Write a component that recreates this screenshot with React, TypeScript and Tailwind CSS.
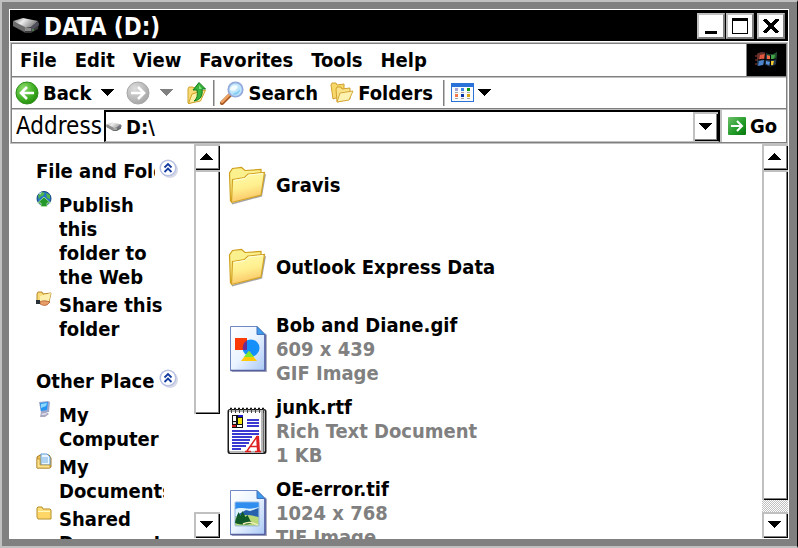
import type { ReactNode } from "react";

const FONT = "font-['DejaVu_Sans_Condensed','DejaVu_Sans',sans-serif]";

function Triangle({ up = false, className = "" }: { up?: boolean; className?: string }) {
  return (
    <svg width="13" height="7" viewBox="0 0 13 7" shapeRendering="crispEdges" className={className} aria-hidden="true">
      <path d={up ? "M0 7L6 0h1l6 7z" : "M0 0h13L7 7H6z"} fill="currentColor" />
    </svg>
  );
}

function DriveIcon({ className, dark = false }: { className: string; dark?: boolean }) {
  const top = dark ? "driveTopDark" : "driveTop";
  return (
    <svg viewBox="0 0 28 18" className={className} aria-hidden="true">
      <defs>
        <linearGradient id={top} x2="1" y2="0.4">
          <stop stopColor={dark ? "#6e6e6e" : "#b0b0b0"} />
          <stop offset="0.45" stopColor="#ececec" />
          <stop offset="1" stopColor={dark ? "#7c7c7c" : "#a4a4a4"} />
        </linearGradient>
      </defs>
      <path d="M1 5v4l12 7h6l7-4 1-6z" fill={dark ? "#3a3a3a" : "#6a6a6a"} />
      <path d="M1 4l10-3 15 3-7 6-7 1z" fill={`url(#${top})`} />
      <path d="M1 4l12 6v5L1 9z" fill={dark ? "#6b6b6b" : "#8d8d8d"} />
      <path d="M19 10l7-6 1 4-8 6z" fill={dark ? "#50505c" : "#747480"} />
      <path d="M13 11h6v3h-6z" fill={dark ? "#8c8c8c" : "#b4b4b4"} />
      <path d="M20 12h2v2h-2z" fill="#4d7a4d" />
    </svg>
  );
}

function WindowsFlag() {
  return (
    <svg viewBox="0 0 24 20" className="h-5 w-6" aria-hidden="true">
      <path d="M2 4c3-2 6-2 9-1 3 2 7 2 11-1l-1 12c-3 3-7 3-10 1-3-1-6-1-9 1z" fill="#26384c" />
      <path d="M2 4c3-2 6-2 9-1l-1 6-8 1z" fill="#6b2f2a" />
      <path d="M12 4c3 1 6 1 10-2l-1 7-9 1z" fill="#1f5a28" />
      <path d="M5 5l5-1-1 5-5 1z" fill="#e0583f" />
      <path d="M12 5l3 1v4h-3z" fill="#ef6a45" />
      <path d="M16 5h4l-1 4h-3z" fill="#42a34b" />
      <path d="M4 11l5-1-1 5-5 1z" fill="#4b83cc" />
      <path d="M11 11l4 1-1 3-3-1z" fill="#5b94dc" />
      <path d="M16 11h3l-1 4h-2z" fill="#f0c72e" />
      <path d="M10.500 3l-1 13M3 10c5-2 11 1 18-1M15.500 5v11" stroke="#000" strokeWidth="1" fill="none" />
      <path d="M1 5v2m0 2v2m0 2v2" stroke="#a33e35" strokeWidth="1" />
    </svg>
  );
}

function RoundArrow({ forward = false }: { forward?: boolean }) {
  const id = forward ? "fwdFill" : "backFill";
  return (
    <svg viewBox="0 0 24 24" className="size-6 shrink-0" aria-hidden="true">
      <defs>
        <radialGradient id={id} cx="0.35" cy="0.3" r="0.8">
          <stop offset="0" stopColor={forward ? "#dedede" : "#8fdc6e"} />
          <stop offset="0.6" stopColor={forward ? "#b9b9b9" : "#3fae23"} />
          <stop offset="1" stopColor={forward ? "#a0a0a0" : "#1f8508"} />
        </radialGradient>
      </defs>
      <circle cx="12" cy="12" r="11" fill={`url(#${id})`} stroke={forward ? "#a8a8a8" : "#2f8f1c"} />
      <g transform={forward ? "translate(24 0) scale(-1 1)" : undefined}>
        <path d="M19 12H7M12 6l-6 6 6 6" fill="none" stroke="#fff" strokeWidth="2.6" />
      </g>
    </svg>
  );
}

function UpFolderIcon() {
  return (
    <svg viewBox="0 0 20 24" className="h-6 w-5 shrink-0" aria-hidden="true">
      <path d="M1 22V8l1-2h4l1 1 7-1v12L2 22.500z" fill="#f7dc76" stroke="#d0a22c" />
      <path d="M1.500 22.500L5 13l13.500-4-5 11z" fill="#fdf0a4" stroke="#cfa025" />
      <path d="M7 20c3-2 4-6 3-11H6l6-7.500L18.500 8H15c1 6-1 11-8 12z" fill="#35b33b" stroke="#147a1c" />
      <path d="M12 4l3 4h-3z" fill="#85e07c" />
    </svg>
  );
}

function SearchIcon() {
  return (
    <svg viewBox="0 0 24 24" className="size-6 shrink-0" aria-hidden="true">
      <path d="M2 22l8-8" stroke="#a85a25" strokeWidth="4" strokeLinecap="round" />
      <path d="M2 21l7-7" stroke="#f0a463" strokeWidth="2.4" strokeLinecap="round" />
      <circle cx="15.500" cy="8.500" r="7.200" fill="#bfe6fb" stroke="#94a9dc" strokeWidth="1.800" />
      <path d="M10 9c0-4 4-6 8-4-1 4-4 6-8 4z" fill="#f3fcff" />
      <path d="M12 13c3 2 8 0 8-5-2 3-5 4-8 5z" fill="#7fcaf4" />
    </svg>
  );
}

function FoldersIcon() {
  return (
    <svg viewBox="0 0 24 22" className="h-6 w-6 shrink-0" aria-hidden="true">
      <path d="M1 3l1-2h4l1 2 7-1v11L3 17z" fill="#f7d868" stroke="#d0a030" />
      <path d="M6 7l1-2h4l1 2 8-1v11L7 20z" fill="#fae387" stroke="#d0a030" />
      <path d="M7 20l3-9 13-2-4 9z" fill="#fdf2b0" stroke="#d6a83a" />
    </svg>
  );
}

function ViewsIcon() {
  return (
    <svg viewBox="0 0 23 19" className="h-[19px] w-[23px] shrink-0" shapeRendering="crispEdges" aria-hidden="true">
      <rect x="0" y="0" width="23" height="19" fill="#2b72d8" />
      <rect x="1" y="4" width="21" height="14" fill="#f8fafc" />
      <rect x="4" y="5" width="3" height="3" fill="#a6a6d4" />
      <rect x="10" y="5" width="3" height="3" fill="#3b84e6" />
      <rect x="16" y="5" width="3" height="3" fill="#119a12" />
      <rect x="4" y="11" width="3" height="3" fill="#f5784c" />
      <rect x="10" y="11" width="3" height="3" fill="#0b35a4" />
      <rect x="16" y="11" width="3" height="3" fill="#dba313" />
      <path d="M4 9.500h3m3 0h3m3 0h3M4 15.500h3m3 0h3m3 0h3" stroke="#a5a5a5" />
    </svg>
  );
}

function GoIcon() {
  return (
    <svg viewBox="0 0 18 18" className="size-[18px] shrink-0" aria-hidden="true">
      <defs>
        <linearGradient id="goFill" x2="1" y2="1">
          <stop stopColor="#6fc06b" />
          <stop offset="0.6" stopColor="#1f9a25" />
          <stop offset="1" stopColor="#08750d" />
        </linearGradient>
      </defs>
      <rect width="18" height="18" rx="1" fill="url(#goFill)" />
      <path d="M3 9h11M9 4l5 5-5 5" fill="none" stroke="#fff" strokeWidth="2" />
    </svg>
  );
}

function FolderIcon() {
  return (
    <svg viewBox="0 0 40 48" className="h-12 w-10" aria-hidden="true">
      <defs>
        <linearGradient id="folderFill" x1="0" y1="0" x2="0.25" y2="1">
          <stop stopColor="#fffbb0" />
          <stop offset="0.55" stopColor="#fff08f" />
          <stop offset="1" stopColor="#fbc667" />
        </linearGradient>
      </defs>
      <path d="M5 43.500l30-8 4-22.500-3 1-3 20-28 8z" fill="#8c8c8c" opacity="0.8" />
      <path d="M3.500 40L2.500 12l3-4.500 9-1 3.500 3L34 8.500v4L31 33z" fill="#fbf08e" stroke="#cf9f1c" strokeWidth="1.200" />
      <path d="M5.500 18.500l12-2 3.500-3.500L37.500 11.500 34 34 4.500 41.500z" fill="url(#folderFill)" stroke="#d3a323" strokeWidth="1.200" />
      <path d="M6.500 19.500l11.500-2 3.500-3.500L36 12.500" fill="none" stroke="#fffde0" />
    </svg>
  );
}

function PageBase({ children }: { children: ReactNode }) {
  return (
    <svg viewBox="0 0 40 48" className="h-12 w-10" aria-hidden="true">
      <defs>
        <linearGradient id="pageFill" x2="1" y2="1">
          <stop stopColor="#ffffff" />
          <stop offset="0.5" stopColor="#eaf3ff" />
          <stop offset="1" stopColor="#a9c8f5" />
        </linearGradient>
      </defs>
      <path d="M5 47h35V10l-2-2v37H5z" fill="#8d8fa6" opacity="0.7" />
      <path d="M3.500 1.500H30l8 8v36H3.500z" fill="url(#pageFill)" stroke="#7089c6" />
      <path d="M3.500 45.500h34.500V10" fill="none" stroke="#5560a0" strokeWidth="1.600" />
      <path d="M30 1.500v8h8z" fill="#3d9bee" stroke="#4273bd" />
      {children}
    </svg>
  );
}

function GifIcon() {
  return (
    <PageBase>
      <circle cx="24" cy="23" r="8.500" fill="#1490fb" />
      <rect x="8" y="13" width="12" height="12" fill="#fb3a08" />
      <path d="M20 15.500V25h-4c-1-4 1-8 4-9.500z" fill="#6b2b94" />
      <path d="M22 26l8 10H14z" fill="#ffc90a" />
      <path d="M22 26l5 6H17z" fill="#7bea2c" />
    </PageBase>
  );
}

function TifIcon() {
  return (
    <PageBase>
      <rect x="8" y="13" width="24" height="24" rx="1" fill="#74b9f5" stroke="#9bb9dd" />
      <path d="M8.500 13.500h23v7c-9-3-14 3-23 0z" fill="#2f8df0" />
      <path d="M8.500 20c6-3 12 2 23-2v9h-23z" fill="#dff3ff" />
      <path d="M10 26l9-5 4 1 8.500-3v9H10z" fill="#2761ae" />
      <path d="M8.500 28c8-3 14-2 23 0v8.500h-23z" fill="#b9d877" />
      <path d="M8.500 31l3-8 2 4 2-5 3 6 2-2 3 6 2 2c-5 2-11 2-17.500 0z" fill="#0f5a28" />
      <path d="M16 35c6-3 10-1 15 1" stroke="#f2f0b4" strokeWidth="1.500" fill="none" />
    </PageBase>
  );
}

function RtfIcon() {
  return (
    <svg viewBox="0 0 40 48" className="h-12 w-10" aria-hidden="true">
      <rect x="0.500" y="2" width="39" height="45" rx="2.500" fill="#1a1a1a" />
      <path d="M2 3h35l1 1v40l-2 2H3l-1-2z" fill="#b8b8b8" />
      <path d="M36.500 3v42" stroke="#6c6c6c" />
      <path d="M2 5h32v38l-1 1H3l-1-1z" fill="#fff" />
      <path d="M3 1.500h35" stroke="#111" strokeWidth="1.500" strokeDasharray="2 2" />
      <path d="M4 4h33" stroke="#444" strokeWidth="4" strokeDasharray="1 3" />
      <g shapeRendering="crispEdges">
        <rect x="5" y="8" width="11" height="13" fill="#111" />
        <rect x="6" y="9" width="3" height="5" fill="#fff" />
        <rect x="6" y="15" width="3" height="2" fill="#ddd" />
        <rect x="11" y="8" width="5" height="2" fill="#1515ca" />
        <rect x="11" y="11" width="4" height="6" fill="#f2e60e" />
        <rect x="5" y="18" width="4" height="2" fill="#d41e1e" />
        <rect x="10" y="18" width="5" height="2" fill="#fff" />
        <path
          d="M20 13h12M20 16h12M20 19h12M5 24h27M5 27h27M5 30h20M5 33h18M5 36h17M5 39h14M5 42h9"
          stroke="#3a3ad0"
          strokeWidth="2"
        />
      </g>
      <path d="M18 44.500h6M28 44.500h6M20 44L30 29.500h1.500M23.500 39.500H31" stroke="#e02020" strokeWidth="1.500" fill="none" />
      <path d="M30.500 29l1 15.500" stroke="#e02020" strokeWidth="3" />
    </svg>
  );
}

function GlobeIcon() {
  return (
    <svg viewBox="0 0 16 16" className="size-4" aria-hidden="true">
      <circle cx="8" cy="7.500" r="7" fill="#2473c8" stroke="#14457c" />
      <path d="M2 4l4-3 3 1-2 3-3 1-1 3zM10 2l4 2v4l-3-1z" fill="#50b54a" />
      <path d="M3 2l3-1-2 3z" fill="#bfe4fa" />
      <path d="M8 6l6.500 6H11v3.500H5V12H1.500z" fill="#24982b" stroke="#b7e8a5" strokeWidth="0.800" />
    </svg>
  );
}

function ShareIcon() {
  return (
    <svg viewBox="0 0 16 16" className="size-4" aria-hidden="true">
      <path d="M1 11L1 3l1-2h4l1 2 8-1-2 9z" fill="#f9dc79" stroke="#b48424" />
      <path d="M4 5l11-3-2 8-9 1z" fill="#fdf0ae" />
      <path d="M4 11c3-2 7-1 10 0l-3 3c-3 1-5 0-7-1z" fill="#e89e67" stroke="#a9562b" strokeWidth="0.700" />
      <path d="M0 9h4v4H0z" fill="#283238" />
    </svg>
  );
}

function ComputerIcon() {
  return (
    <svg viewBox="0 0 16 16" className="size-4" aria-hidden="true">
      <path d="M3 1l9-1 2 1-1 10-8 1z" fill="#9da8cc" />
      <path d="M4 2l8-1-1 8-6 1z" fill="#2694f1" />
      <path d="M5 3l6-1-1 3-5 2z" fill="#8bd9ff" />
      <path d="M5 11h5l3 2-4 3H4z" fill="#aaa9c2" />
      <path d="M5 13l5-1 1 1-4 1z" fill="#ecebf5" />
    </svg>
  );
}

function DocumentsIcon() {
  return (
    <svg viewBox="0 0 16 16" className="size-4" aria-hidden="true">
      <path d="M1 4l3-2h9l2 3v9l-2 1H1z" fill="#eebf4d" stroke="#a67720" />
      <path d="M5 1h6l3 3v8H5z" fill="#eaf6ff" stroke="#5799d8" />
      <path d="M6 5h6M6 7h6M6 9h6" stroke="#73afe3" />
      <path d="M1 6h3v6h10v3H1z" fill="#fbe28b" stroke="#b78a2c" strokeWidth="0.700" />
    </svg>
  );
}

function SharedFolderIcon() {
  return (
    <svg viewBox="0 0 16 16" className="size-4" aria-hidden="true">
      <path d="M1 12V3l1-1h4l1 2h7l1 1v9H2z" fill="#fbe17c" stroke="#b98a20" />
      <path d="M2 13V6h11l1 1v6z" fill="#fdd667" />
      <path d="M2 6.500h12" stroke="#fff8c0" />
    </svg>
  );
}

function CollapseIcon() {
  return (
    <svg viewBox="0 0 20 20" className="size-5" aria-hidden="true">
      <circle cx="11" cy="11" r="8" fill="#d8dbe8" />
      <circle cx="9" cy="9" r="7.800" fill="#fff" stroke="#b8c0e2" strokeWidth="1.500" />
      <path d="M5.500 8.500L9 5l3.500 3.500M5.500 13L9 9.500l3.500 3.500" fill="none" stroke="#143ba0" strokeWidth="1.800" />
    </svg>
  );
}

const bevel =
  "flex items-center justify-center border-2 border-[#c0c0c0] border-r-[#808080] border-b-[#808080] bg-white";
const scrollPart =
  "flex shrink-0 items-center justify-center border-t-2 border-l-2 border-[#c0c0c0] bg-white pr-[3px] pb-[3px] shadow-[inset_-1px_-1px_0_#000,inset_-2px_-2px_0_#808080]";

function ScrollBar({ label, thumb, dither = false }: { label: string; thumb: string; dither?: boolean }) {
  return (
    <div className="flex w-[26px] shrink-0 flex-col" aria-label={label}>
      <button type="button" aria-label="Scroll up" className={`h-[26px] ${scrollPart}`}>
        <Triangle up />
      </button>
      <div className={`min-h-0 ${scrollPart} ${thumb}`} />
      <div
        className={
          dither
            ? "h-3 shrink-0 bg-[repeating-conic-gradient(#c0c0c0_0_25%,#fff_0_50%)] bg-size-[2px_2px]"
            : "min-h-0 flex-1"
        }
      />
      <button type="button" aria-label="Scroll down" className={`mb-px h-[26px] ${scrollPart}`}>
        <Triangle />
      </button>
    </div>
  );
}

function TaskGroup({ title, tasks }: { title: string; tasks: { icon: ReactNode; lines: string[] }[] }) {
  return (
    <section>
      <div className="mb-2.5 flex h-6 items-center">
        <h2 className="w-[119px] overflow-hidden whitespace-nowrap">{title}</h2>
        <button type="button" aria-label={`Collapse ${title}`} className="-mt-1 ml-1">
          <CollapseIcon />
        </button>
      </div>
      <ul className="flex flex-col gap-1">
        {tasks.map((task) => (
          <li key={task.lines.join(" ")}>
            <a href="#" className="flex items-start gap-[7px] pr-[30px]">
              <span className="-mt-0.5 shrink-0">{task.icon}</span>
              <span className="min-w-0 flex-1 overflow-hidden whitespace-nowrap">
                {task.lines.map((line) => (
                  <span key={line} className="block">
                    {line}
                  </span>
                ))}
              </span>
            </a>
          </li>
        ))}
      </ul>
    </section>
  );
}

const fileTasks = [
  { icon: <GlobeIcon />, lines: ["Publish", "this", "folder to", "the Web"] },
  { icon: <ShareIcon />, lines: ["Share this", "folder"] },
];

const otherPlaces = [
  { icon: <ComputerIcon />, lines: ["My", "Computer"] },
  { icon: <DocumentsIcon />, lines: ["My", "Documents"] },
  { icon: <SharedFolderIcon />, lines: ["Shared", "Documents"] },
];

const files: { icon: ReactNode; name: string; details: string[] }[] = [
  { icon: <FolderIcon />, name: "Gravis", details: [] },
  { icon: <FolderIcon />, name: "Outlook Express Data", details: [] },
  { icon: <GifIcon />, name: "Bob and Diane.gif", details: ["609 x 439", "GIF Image"] },
  { icon: <RtfIcon />, name: "junk.rtf", details: ["Rich Text Document", "1 KB"] },
  { icon: <TifIcon />, name: "OE-error.tif", details: ["1024 x 768", "TIF Image"] },
];

function Separator() {
  return <div className="h-[26px] w-0.5 shrink-0 border-l border-[#808080] bg-[#c0c0c0]" />;
}

export default function App() {
  return (
    <div
      className={`flex h-screen flex-col border-t-2 border-r border-b-2 border-l-2 border-[#c0c0c0] border-r-black bg-[#808080] pt-[7px] pr-2 pb-[7px] pl-[7px] text-xl leading-6 font-bold text-black ${FONT}`}
    >
      <main className="flex min-h-0 flex-1 flex-col overflow-hidden border-t border-r border-l border-white bg-white">
        <header className="flex h-[31px] shrink-0 items-center bg-black pr-[3px] pl-0.5">
          <DriveIcon className="h-[18px] w-7" dark />
          <h1 className="ml-1 flex-1 pt-0.5 text-2xl leading-7 text-white">DATA (D:)</h1>
          <button type="button" aria-label="Minimize" className={`h-[26px] w-7 ${bevel}`}>
            <span className="mt-3.5 h-[3px] w-3 bg-black" />
          </button>
          <button type="button" aria-label="Maximize" className={`ml-px h-[26px] w-7 ${bevel}`}>
            <span className="h-4 w-4 border border-t-[3px] border-black" />
          </button>
          <button type="button" aria-label="Close" className={`ml-[3px] h-[26px] w-7 ${bevel}`}>
            <svg viewBox="0 0 16 14" className="h-3.5 w-4" shapeRendering="crispEdges" aria-hidden="true">
              <path d="M1 0l14 14M15 0L1 14" stroke="#000" strokeWidth="3.500" />
            </svg>
          </button>
        </header>

        <div className="mt-px shrink-0 border border-[#c0c0c0]">
          <div className="border border-[#808080]">
            <nav className="flex h-8 items-stretch">
              <div className="flex flex-1 items-center gap-[18px] pl-2">
                {["File", "Edit", "View", "Favorites", "Tools", "Help"].map((item) => (
                  <button type="button" key={item}>
                    {item}
                  </button>
                ))}
              </div>
              <div className="flex w-10 items-center justify-center border-l border-[#808080] bg-black">
                <WindowsFlag />
              </div>
            </nav>

            <div className="flex h-[33px] items-center border-t border-b border-t-[#808080] border-b-[#808080] pl-[3px] shadow-[inset_0_1px_0_#c0c0c0]">
              <button type="button" className="flex items-center gap-1">
                <RoundArrow />
                Back
              </button>
              <button type="button" aria-label="Back history" className="ml-2.5">
                <Triangle />
              </button>
              <button type="button" aria-label="Forward" className="ml-3">
                <RoundArrow forward />
              </button>
              <button type="button" aria-label="Forward history" className="ml-2.5 text-[#808080]">
                <Triangle />
              </button>
              <button type="button" aria-label="Up" className="mr-1.5 ml-3.5">
                <UpFolderIcon />
              </button>
              <Separator />
              <button type="button" className="ml-[5px] flex items-center gap-1">
                <SearchIcon />
                Search
              </button>
              <button type="button" className="mr-2.5 ml-3 flex items-center gap-1">
                <FoldersIcon />
                Folders
              </button>
              <Separator />
              <button type="button" aria-label="Views" className="ml-1.5 flex items-center gap-1">
                <ViewsIcon />
                <Triangle />
              </button>
            </div>

            <form className="flex h-[33px] border-t border-[#c0c0c0]" onSubmit={(event) => event.preventDefault()}>
              <label htmlFor="address" className="w-[92px] shrink-0 pl-1 text-2xl leading-8 font-normal">
                Address
              </label>
              <div className="flex flex-1 items-center border-t-2 border-r-2 border-b border-l-2 border-t-black border-r-black border-b-[#c0c0c0] border-l-black">
                <DriveIcon className="h-3 w-4 shrink-0" />
                <input id="address" defaultValue="D:\" className="ml-1 min-w-0 flex-1 bg-white outline-none" />
                <button type="button" aria-label="Show addresses" className={`w-[25px] self-stretch ${scrollPart}`}>
                  <Triangle />
                </button>
              </div>
              <button type="submit" className="flex w-[66px] items-center gap-1 border-l-2 border-[#c0c0c0] pl-1.5">
                <GoIcon />
                Go
              </button>
            </form>
          </div>
        </div>

        <div className="flex min-h-0 flex-1">
          <aside className="flex w-[184px] shrink-0 flex-col gap-7 overflow-hidden pt-[15px] pl-[26px]">
            <TaskGroup title="File and Folder Tasks" tasks={fileTasks} />
            <TaskGroup title="Other Places" tasks={otherPlaces} />
          </aside>
          <ScrollBar label="Tasks scroll bar" thumb="h-[244px]" />
          <ul className="min-w-0 flex-1 overflow-hidden pl-[7px]">
            {files.map((file) => (
              <li key={file.name} className="flex h-[82px] items-center gap-[9px]">
                {file.icon}
                <div>
                  <div>{file.name}</div>
                  {file.details.map((detail) => (
                    <div key={detail} className="text-[#808080]">
                      {detail}
                    </div>
                  ))}
                </div>
              </li>
            ))}
          </ul>
          <ScrollBar label="Files scroll bar" thumb="flex-1" dither />
        </div>
      </main>
    </div>
  );
}
